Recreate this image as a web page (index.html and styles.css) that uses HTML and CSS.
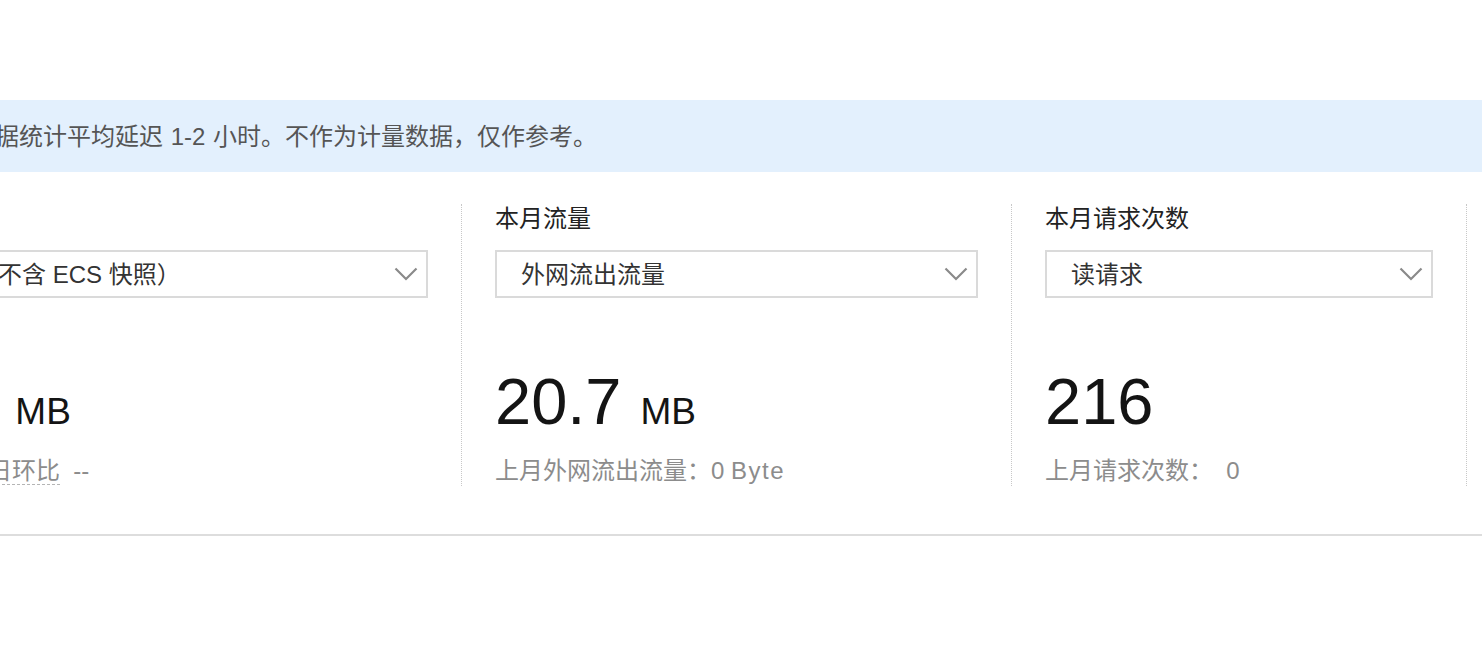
FILE: index.html
```html
<!DOCTYPE html>
<html lang="zh-CN">
<head>
<meta charset="utf-8">
<title>用量统计</title>
<link rel="stylesheet" href="styles.css">
</head>
<body>
<div class="page">
  <div class="notice"><span class="notice-text">数据统计平均延迟 1-2 小时。不作为计量数据，仅作参考。</span></div>

  <div class="stats">
    <div class="stat stat-storage">
      <div class="stat-title">存储用量</div>
      <div class="select">
        <span class="select-value">总量（不含 ECS 快照）</span>
        <svg class="chevron" width="24" height="14" viewBox="0 0 24 14"><polyline points="1.5,1.5 12,12 22.5,1.5" fill="none" stroke="#8a8a8a" stroke-width="2.2"/></svg>
      </div>
      <div class="stat-value">8.2<span class="unit">MB</span></div>
      <div class="stat-sub"><span class="hint">用量较昨日环比</span>&nbsp;&nbsp;--</div>
    </div>

    <div class="stat stat-traffic">
      <div class="stat-title">本月流量</div>
      <div class="select">
        <span class="select-value">外网流出流量</span>
        <svg class="chevron" width="24" height="14" viewBox="0 0 24 14"><polyline points="1.5,1.5 12,12 22.5,1.5" fill="none" stroke="#8a8a8a" stroke-width="2.2"/></svg>
      </div>
      <div class="stat-value">20.7<span class="unit">MB</span></div>
      <div class="stat-sub">上月外网流出流量：0 <span class="latin">Byte</span></div>
    </div>

    <div class="stat stat-requests">
      <div class="stat-title">本月请求次数</div>
      <div class="select">
        <span class="select-value">读请求</span>
        <svg class="chevron" width="24" height="14" viewBox="0 0 24 14"><polyline points="1.5,1.5 12,12 22.5,1.5" fill="none" stroke="#8a8a8a" stroke-width="2.2"/></svg>
      </div>
      <div class="stat-value">216</div>
      <div class="stat-sub">上月请求次数：&nbsp;&nbsp;0</div>
    </div>
  </div>

  <div class="divider"></div>
</div>
</body>
</html>
```

FILE: styles.css
```css
* {
  box-sizing: border-box;
}

html, body {
  margin: 0;
  padding: 0;
  background: #ffffff;
  overflow: hidden;
}

body {
  font-family: "Liberation Sans", "Noto Sans CJK SC", sans-serif;
  color: #333333;
}

.page {
  padding-top: 100px;
}

.notice {
  height: 72px;
  line-height: 74px;
  background: #e3f0fd;
  font-size: 24px;
  color: #555555;
  white-space: nowrap;
  overflow: hidden;
}

.notice-text {
  display: inline-block;
  margin-left: -29px;
  word-spacing: 1px;
}

.stats {
  display: flex;
  margin-top: 32px;
  margin-left: -133px;
}

.stat {
  flex: 0 0 auto;
  height: 282px;
  padding: 0 33px;
  border-right: 1px dotted #c8c8c8;
  display: flex;
  flex-direction: column;
}

.stat-storage {
  width: 595px;
}

.stat-traffic {
  width: 550px;
}

.stat-requests {
  width: 455px;
}

.stat-title {
  font-size: 24px;
  line-height: 30px;
  color: #222222;
  white-space: nowrap;
}

.select {
  margin-top: 16px;
  height: 48px;
  border: 2px solid #dadada;
  display: flex;
  align-items: center;
  justify-content: space-between;
  padding: 0 8px 3px 24px;
  background: #ffffff;
}

.select-value {
  font-size: 24px;
  color: #333333;
  white-space: nowrap;
}

.chevron {
  flex: 0 0 auto;
  display: block;
  margin-top: 2px;
}

.stat-value {
  margin-top: 72px;
  font-size: 65px;
  line-height: 64px;
  height: 64px;
  color: #141414;
  white-space: nowrap;
}

.stat-storage .stat-value {
  margin-left: 6px;
}

.unit {
  font-size: 37px;
  margin-left: 19px;
}

.stat-sub {
  margin-top: 22px;
  font-size: 24px;
  line-height: 30px;
  color: #8c8c8c;
  white-space: nowrap;
}

.stat-storage .stat-sub {
  margin-left: -8px;
}

.latin {
  letter-spacing: 1.5px;
}

.hint {
  border-bottom: 1px dashed #b5b5b5;
}

.divider {
  margin-top: 48px;
  height: 2px;
  background: #dddddd;
}
```
